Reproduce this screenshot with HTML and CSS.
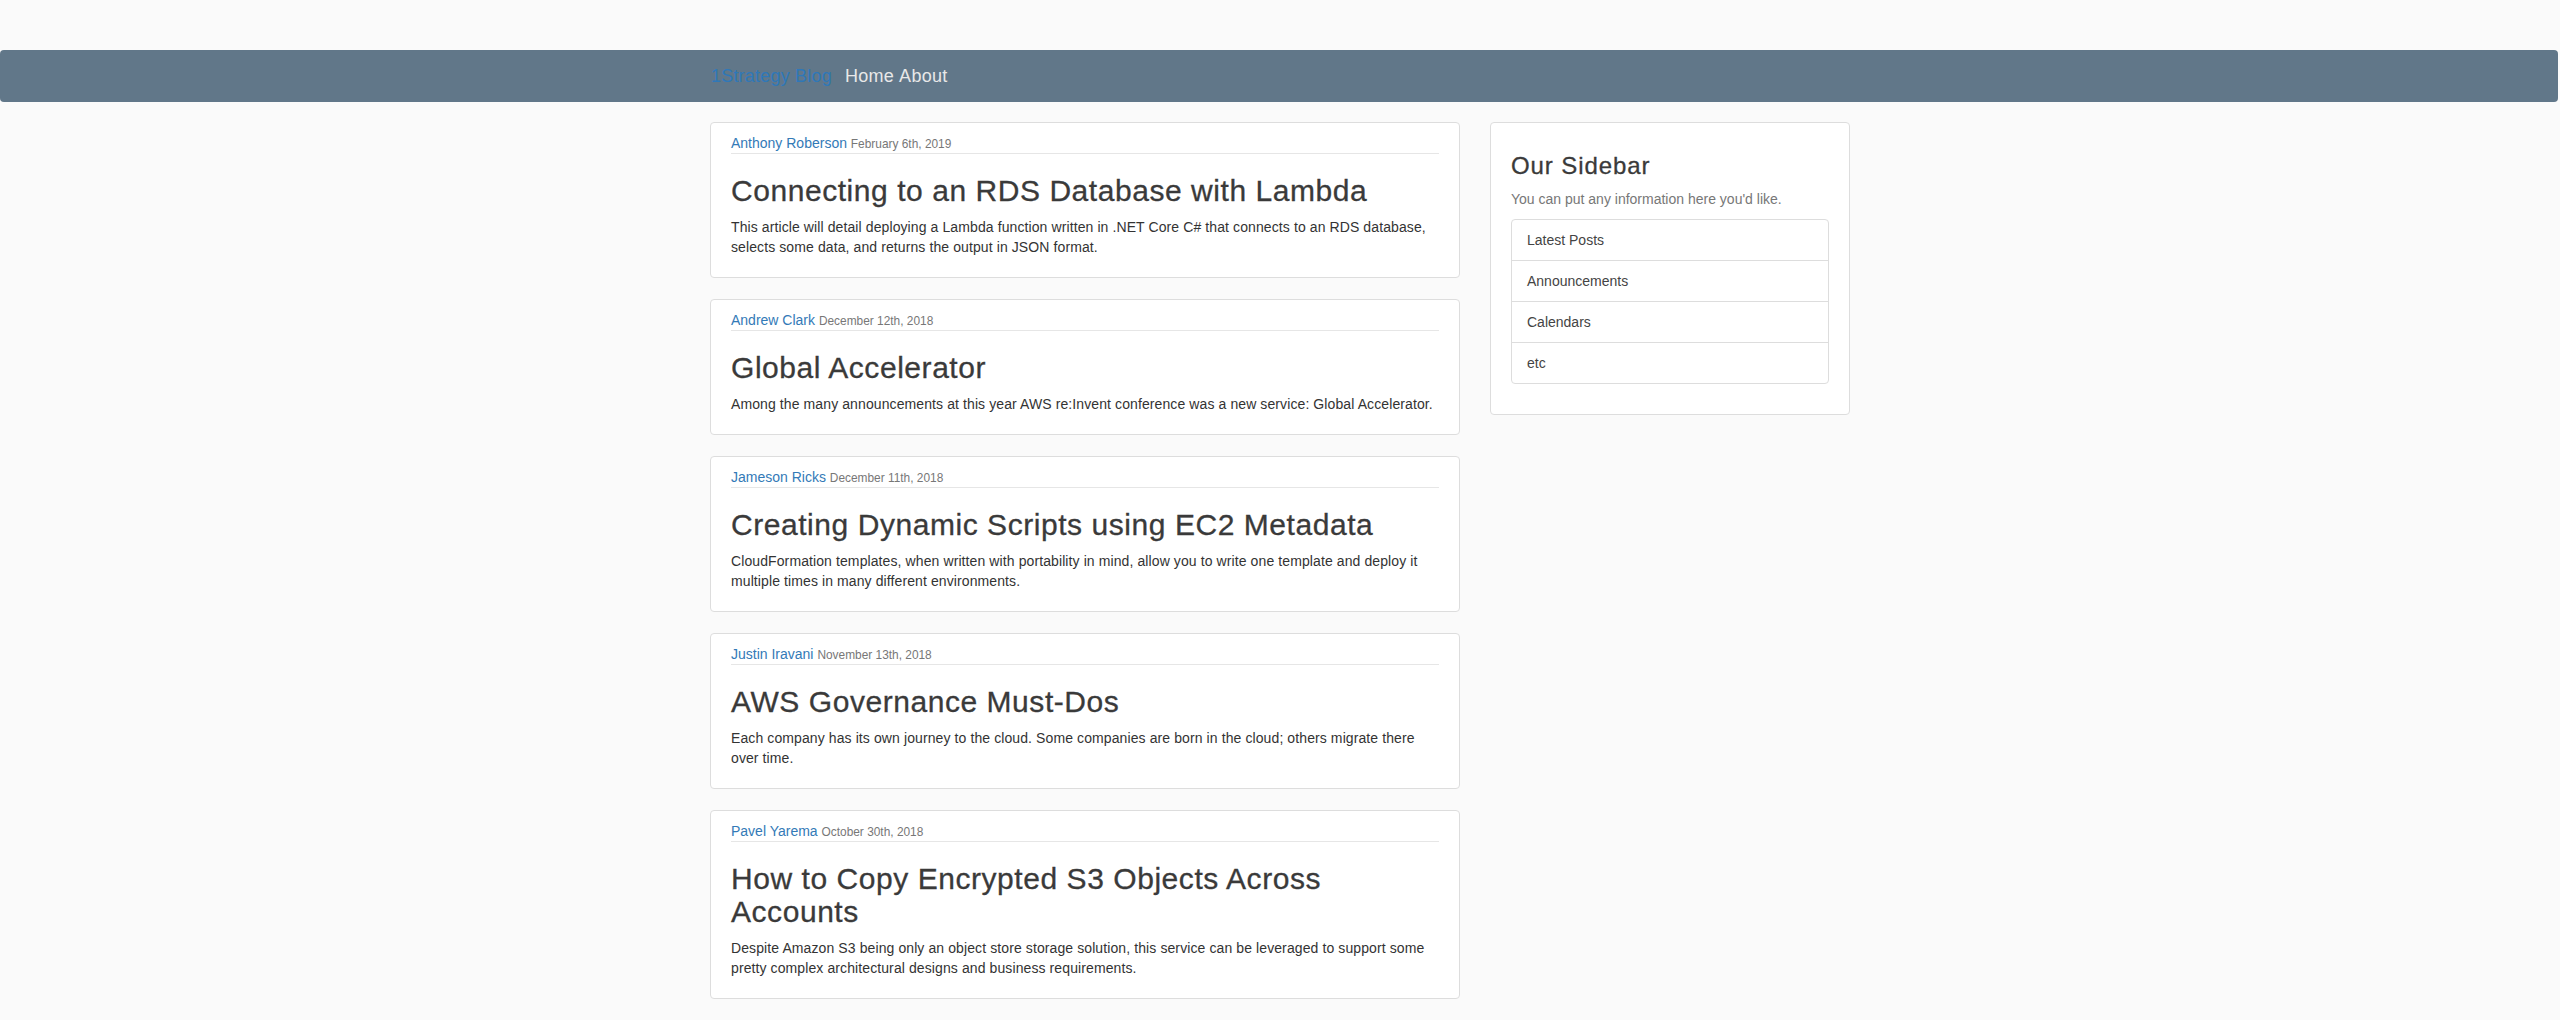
FILE: index.html
```html
<!DOCTYPE html>
<html>
<head>
<meta charset="utf-8">
<title>1Strategy Blog</title>
<link rel="stylesheet" href="styles.css">
</head>
<body>
<nav class="navbar">
  <div class="container nav-inner">
    <a class="brand" href="#">1Strategy Blog</a>
    <span class="nav-links"><a href="#">Home</a> <a href="#">About</a></span>
  </div>
</nav>
<div class="container">
  <div class="row">
    <main class="col-main">
      <article class="card">
        <div class="meta"><a class="author" href="#">Anthony Roberson</a> <small>February 6th, 2019</small></div>
        <h2>Connecting to an RDS Database with Lambda</h2>
        <p>This article will detail deploying a Lambda function written in .NET Core C# that connects to an RDS database, selects some data, and returns the output in JSON format.</p>
      </article>
      <article class="card">
        <div class="meta"><a class="author" href="#">Andrew Clark</a> <small>December 12th, 2018</small></div>
        <h2>Global Accelerator</h2>
        <p>Among the many announcements at this year AWS re:Invent conference was a new service: Global Accelerator.</p>
      </article>
      <article class="card">
        <div class="meta"><a class="author" href="#">Jameson Ricks</a> <small>December 11th, 2018</small></div>
        <h2>Creating Dynamic Scripts using EC2 Metadata</h2>
        <p>CloudFormation templates, when written with portability in mind, allow you to write one template and deploy it multiple times in many different environments.</p>
      </article>
      <article class="card">
        <div class="meta"><a class="author" href="#">Justin Iravani</a> <small>November 13th, 2018</small></div>
        <h2>AWS Governance Must-Dos</h2>
        <p>Each company has its own journey to the cloud. Some companies are born in the cloud; others migrate there over time.</p>
      </article>
      <article class="card">
        <div class="meta"><a class="author" href="#">Pavel Yarema</a> <small>October 30th, 2018</small></div>
        <h2>How to Copy Encrypted S3 Objects Across Accounts</h2>
        <p>Despite Amazon S3 being only an object store storage solution, this service can be leveraged to support some pretty complex architectural designs and business requirements.</p>
      </article>
    </main>
    <aside class="col-side">
      <div class="card sidebar">
        <h3>Our Sidebar</h3>
        <p class="muted">You can put any information here you'd like.</p>
        <ul class="list-group">
          <li>Latest Posts</li>
          <li>Announcements</li>
          <li>Calendars</li>
          <li>etc</li>
        </ul>
      </div>
    </aside>
  </div>
</div>
</body>
</html>
```
FILE: styles.css
```css
* { box-sizing: border-box; }
html, body { margin: 0; padding: 0; }
body {
  background: #fafafa;
  font-family: "Liberation Sans", Arial, sans-serif;
  font-size: 14px;
  line-height: 20px;
  color: #333;
  padding-top: 50px;
}
a { text-decoration: none; }
.container {
  width: 1170px;
  margin: 0 auto;
  padding: 0 15px;
}
.navbar {
  background: #617789;
  height: 52px;
  border-radius: 4px;
  margin: 0 2px 20px 0;
}
.nav-inner {
  display: flex;
  align-items: center;
  height: 52px;
  padding-left: 17px;
  font-size: 18px;
}
.brand {
  color: #2f78b8;
  margin-right: 13px;
  letter-spacing: 0.2px;
}
.nav-links a { color: #e8e8e8; letter-spacing: 0.3px; }
.row {
  display: flex;
  margin: 0 -15px;
}
.col-main { width: 780px; padding: 0 15px; }
.col-side { width: 390px; padding: 0 15px; }
.card {
  background: #fff;
  border: 1px solid #ddd;
  border-radius: 4px;
  padding: 10px 20px;
  margin-bottom: 21px;
}
.meta {
  border-bottom: 1px solid #e6e6e6;
  height: 21px;
}
.author { color: #337ab7; }
.meta small { font-size: 11.9px; color: #777; }
h2 {
  font-size: 30px;
  font-weight: 500;
  line-height: 33px;
  margin: 20px 0 10px;
  color: #3a3a3a;
  letter-spacing: 0.55px;
  -webkit-text-stroke: 0.3px #3a3a3a;
}
p { margin: 0 0 10px; letter-spacing: 0.1px; }
.sidebar h3 {
  font-size: 24px;
  font-weight: 500;
  line-height: 26.4px;
  margin: 20px 0 10px;
  color: #3a3a3a;
  letter-spacing: 0.9px;
  -webkit-text-stroke: 0.3px #3a3a3a;
}
.muted { color: #777; letter-spacing: 0; }
.list-group {
  list-style: none;
  margin: 0 0 20px;
  padding: 0;
}
.list-group li {
  border: 1px solid #ddd;
  margin-bottom: -1px;
  padding: 10px 15px;
  color: #444;
}
.list-group li:first-child { border-radius: 4px 4px 0 0; }
.list-group li:last-child { border-radius: 0 0 4px 4px; margin-bottom: 0; }
```
